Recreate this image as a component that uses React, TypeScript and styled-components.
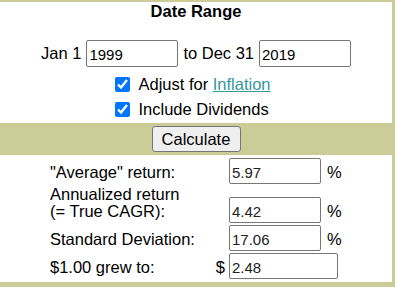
import React from 'react'
import styled, { createGlobalStyle } from 'styled-components'

const GlobalStyle = createGlobalStyle`
  html, body {
    margin: 0;
    padding: 0;
    background: rgb(255, 255, 255);
  }
  body {
    font-family: "Liberation Sans", Arial, sans-serif;
    color: rgb(0, 0, 0);
  }
`

type ResultRow = {
  label: string[]
  value: string
  prefix?: string
  unit?: string
  wide?: boolean
}

const results: ResultRow[] = [
  { label: ['"Average" return:'], value: '5.97', unit: '%' },
  { label: ['Annualized return', '(= True CAGR):'], value: '4.42', unit: '%' },
  { label: ['Standard Deviation:'], value: '17.06', unit: '%' },
  { label: ['$1.00 grew to:'], value: '2.48', prefix: '$', wide: true },
]

const App: React.FC = function () {
  return (
    <>
      <GlobalStyle />
      <Frame>
        <DateSection>
          <Heading>Date Range</Heading>
          <DateRow>
            <span>Jan 1</span>
            <TextBox type="text" defaultValue="1999" />
            <span>to Dec 31</span>
            <TextBox type="text" defaultValue="2019" />
          </DateRow>
          <CheckGroup>
            <CheckRow>
              <Check type="checkbox" defaultChecked />
              <span>Adjust for <Link href="#">Inflation</Link></span>
            </CheckRow>
            <CheckRow>
              <Check type="checkbox" defaultChecked />
              <span>Include Dividends</span>
            </CheckRow>
          </CheckGroup>
        </DateSection>
        <Band>
          <CalcButton type="button">Calculate</CalcButton>
        </Band>
        <Results>
          {results.map((row) => (
            <React.Fragment key={row.value}>
              <Label>
                {row.label.map((line) => (
                  <div key={line}>{line}</div>
                ))}
              </Label>
              <Prefix>{row.prefix}</Prefix>
              <ResultBox type="text" readOnly defaultValue={row.value} $wide={row.wide} />
              {!row.wide && <Unit>{row.unit}</Unit>}
            </React.Fragment>
          ))}
        </Results>
      </Frame>
    </>
  )
}

const Frame = styled.div`
  width: 395px;
  height: 287px;
  box-sizing: border-box;
  border-top: 2px solid rgb(204, 204, 153);
  border-right: 3px solid rgb(204, 204, 153);
  border-bottom: 5px solid rgb(204, 204, 153);
  background: rgb(255, 255, 255);
  display: flex;
  flex-direction: column;
  font-size: 16.5px;
`

const DateSection = styled.div`
  display: flex;
  flex-direction: column;
  align-items: center;
  padding-bottom: 1px;
`

const Heading = styled.div`
  font-weight: bold;
  line-height: 19px;
  height: 19px;
  margin-bottom: 19px;
`

const DateRow = styled.div`
  display: flex;
  align-items: center;
  gap: 5px;
  height: 27px;
  line-height: 19px;
  margin-bottom: 5px;
`

const TextBox = styled.input`
  width: 92px;
  height: 27px;
  box-sizing: border-box;
  margin: 0;
  padding: 3px 2px 1px;
  border: 1px solid rgb(118, 118, 118);
  border-radius: 2px;
  font-family: "Liberation Sans", Arial, sans-serif;
  font-size: 15px;
  color: rgb(0, 0, 0);
  background: rgb(255, 255, 255);
  outline: none;
`

const CheckGroup = styled.div`
  display: flex;
  flex-direction: column;
  align-items: flex-start;
  padding-right: 6px;
`

const CheckRow = styled.label`
  display: flex;
  align-items: center;
  gap: 8px;
  height: 25px;
  line-height: 19px;
`

const Check = styled.input`
  width: 15px;
  height: 15px;
  margin: 0;
  accent-color: rgb(0, 117, 255);
`

const Link = styled.a`
  color: rgb(51, 153, 153);
  text-decoration: underline;
`

const Band = styled.div`
  height: 32px;
  background: rgb(204, 204, 153);
  display: flex;
  align-items: center;
  justify-content: center;
`

const CalcButton = styled.button`
  width: 89px;
  height: 26px;
  margin: 0;
  padding: 0;
  border: 1px solid rgb(118, 118, 118);
  border-radius: 3px;
  background: rgb(239, 239, 239);
  font-family: "Liberation Sans", Arial, sans-serif;
  font-size: 16.5px;
  color: rgb(0, 0, 0);
`

const Results = styled.div`
  display: grid;
  grid-template-columns: 163px 16px 92px auto;
  row-gap: 2px;
  align-items: end;
  padding: 3px 0 0 50px;
`

const Label = styled.div`
  line-height: 16.5px;
  padding-bottom: 4px;
`

const Prefix = styled.div`
  line-height: 16.5px;
  padding: 0 4px 4px 0;
  text-align: right;
`

const Unit = styled.div`
  line-height: 16.5px;
  padding: 0 0 4px 6px;
`

const ResultBox = styled(TextBox)<{ $wide?: boolean }>`
  width: ${(p) => (p.$wide ? '109px' : '92px')};
  height: 26px;
  font-size: 15px;
  color: rgb(34, 34, 34);
  grid-column: ${(p) => (p.$wide ? 'span 2' : 'auto')};
`

export default App
